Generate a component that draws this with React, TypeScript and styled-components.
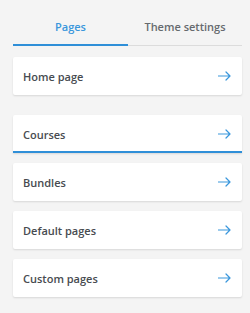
import React from "react";
import styled, { createGlobalStyle } from "styled-components";

const Global = createGlobalStyle`
  html, body { margin: 0; padding: 0; background: #f4f4f4; }
  body { font-family: "Open Sans", "Noto Sans", sans-serif; }
`;

const Page = styled.div`
  width: 250px;
  height: 313px;
  box-sizing: border-box;
  padding: 0 8px 0 13px;
  background: #f4f4f4;
`;

const Tabs = styled.div`
  display: grid;
  grid-template-columns: 115px 1fr;
  height: 45px;
  border-bottom: 1px solid #dcdcdc;
`;

const Tab = styled.div<{ $active?: boolean }>`
  height: 46px;
  box-sizing: border-box;
  padding-top: 19px;
  line-height: 16px;
  text-align: center;
  font-size: 11px;
  font-weight: 600;
  color: ${(p) => (p.$active ? "#3a97dc" : "#666a6e")};
  box-shadow: ${(p) => (p.$active ? "inset 0 -2px 0 #2f8fd8" : "none")};
`;

const List = styled.div`
  display: flex;
  flex-direction: column;
  gap: 10px;
  margin-top: 11px;
  width: 229px;
`;

const Card = styled.div<{ $active?: boolean; $spaced?: boolean }>`
  height: 38px;
  box-sizing: border-box;
  background: #fff;
  box-shadow: 0 1px 2px rgba(0, 0, 0, 0.12);
  display: flex;
  align-items: center;
  justify-content: space-between;
  padding: ${(p) => (p.$active ? "2px" : "0")} 11px 0 10px;
  margin-top: ${(p) => (p.$spaced ? "10px" : "0")};
  border-bottom: ${(p) => (p.$active ? "2px solid #2f8fd8" : "none")};
  border-radius: ${(p) => (p.$active ? "2px 2px 0 0" : "2px")};
`;

const Label = styled.span`
  font-size: 11px;
  font-weight: 600;
  color: #474b50;
`;

const Arrow = () => (
  <svg width="13" height="10" viewBox="0 0 13 10" fill="none">
    <path
      d="M0.5 5H12M8 1L12 5L8 9"
      stroke="#3a97dc"
      strokeWidth="1.2"
      strokeLinecap="round"
      strokeLinejoin="round"
    />
  </svg>
);

const items = [
  { label: "Home page" },
  { label: "Courses", active: true, spaced: true },
  { label: "Bundles" },
  { label: "Default pages" },
  { label: "Custom pages" },
];

export default function App() {
  return (
    <>
      <Global />
      <Page>
        <Tabs>
          <Tab $active>Pages</Tab>
          <Tab>Theme settings</Tab>
        </Tabs>
        <List>
          {items.map((it) => (
            <Card key={it.label} $active={it.active} $spaced={it.spaced}>
              <Label>{it.label}</Label>
              <Arrow />
            </Card>
          ))}
        </List>
      </Page>
    </>
  );
}
